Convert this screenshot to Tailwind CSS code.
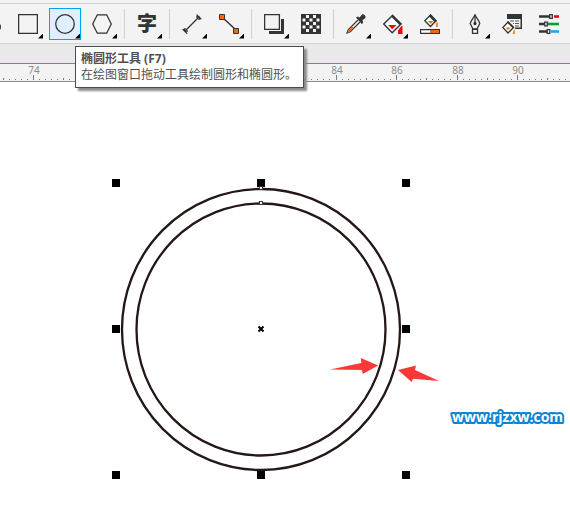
<!DOCTYPE html>
<html lang="zh-CN">

<head>
    <meta charset="UTF-8">
    <meta name="viewport" content="width=device-width, initial-scale=1.0">
    <title>椭圆形工具</title>
    <script src="https://cdn.jsdelivr.net/npm/@tailwindcss/browser@4"></script>
</head>

<body class="bg-white font-['Noto_Sans','Noto_Sans_CJK_SC',sans-serif] min-h-screen flex flex-col overflow-hidden">
    <!-- toolbar -->
    <header class="bg-[#f3f3f3] pt-[3px]">
        <div class="border-y border-[#d4d4d4] flex items-center gap-[5px] h-[41px] -ml-[25px] pr-1 overflow-hidden [&>button]:relative [&>button]:size-8 [&>button]:shrink-0 [&>button]:flex [&>button]:items-center [&>button]:justify-center [&>span]:w-px [&>span]:h-[30px] [&>span]:mx-px [&>span]:bg-[#d0d0d0] [&>span]:shrink-0">
            <button type="button" aria-label="手绘">
                <svg class="size-5 overflow-visible" viewBox="0 0 20 20"><circle cx="16" cy="13" r="4" fill="#333"/></svg>
            </button>
            <button type="button" aria-label="矩形工具">
                <svg class="size-5" viewBox="0 0 20 20"><path d="M.6 .6h18.8v18.8H.6z" fill="none" stroke="#333" stroke-width="1.3"/></svg>
                <i class="absolute right-px bottom-px size-[5px] bg-black [clip-path:polygon(100%_0,100%_100%,0_100%)]"></i>
            </button>
            <button type="button" aria-label="椭圆形工具" class="bg-[#e0efff] border border-[#00a2f5]">
                <svg class="size-5" viewBox="0 0 20 20"><circle cx="10" cy="10" r="9.3" fill="none" stroke="#333" stroke-width="1.3"/></svg>
                <i class="absolute right-0 bottom-0 size-[5px] bg-black [clip-path:polygon(100%_0,100%_100%,0_100%)]"></i>
            </button>
            <button type="button" aria-label="多边形工具">
                <svg class="size-5" viewBox="0 0 20 20"><path d="M5.3 .8h9.4L19.3 10l-4.6 9.2H5.3L.7 10z" fill="none" stroke="#333" stroke-width="1.3"/></svg>
                <i class="absolute right-px bottom-px size-[5px] bg-black [clip-path:polygon(100%_0,100%_100%,0_100%)]"></i>
            </button>
            <span></span>
            <button type="button" aria-label="文本工具" class="text-[20px] leading-5 font-black text-[#333]">字
                <i class="absolute right-px bottom-px size-[5px] bg-black [clip-path:polygon(100%_0,100%_100%,0_100%)]"></i>
            </button>
            <span></span>
            <button type="button" aria-label="平行度量">
                <svg class="size-5" viewBox="0 0 20 20" fill="none" stroke="#333" stroke-width="1.3"><path d="M2.8 17.2 17.2 2.8M.6 15l4.6 4.6M14.6 .6l4.6 4.6M2.8 14v3.2H6M14 2.8h3.2V6"/></svg>
                <i class="absolute right-px bottom-px size-[5px] bg-black [clip-path:polygon(100%_0,100%_100%,0_100%)]"></i>
            </button>
            <button type="button" aria-label="直线连接器">
                <svg class="size-5" viewBox="0 0 20 20" stroke="#333"><path d="M3 3l14 13" stroke-width="1.5"/><path d="M.5 .5h5v5h-5zM14.5 14.5h5v5h-5z" fill="#ff6a00"/></svg>
                <i class="absolute right-px bottom-px size-[5px] bg-black [clip-path:polygon(100%_0,100%_100%,0_100%)]"></i>
            </button>
            <span></span>
            <button type="button" aria-label="阴影工具">
                <svg class="size-5" viewBox="0 0 20 20"><path d="M5 5h15v15H5z" fill="#333"/><path d="M0 0h17v17H0z" fill="#f3f3f3"/><path d="M.6 .6h14.8v14.8H.6z" fill="#f3f3f3" stroke="#333" stroke-width="1.3"/></svg>
                <i class="absolute right-px bottom-px size-[5px] bg-black [clip-path:polygon(100%_0,100%_100%,0_100%)]"></i>
            </button>
            <button type="button" aria-label="透明度工具">
                <svg class="size-5" viewBox="0 0 20 20"><path d="M0 0h20v20H0z" fill="#333"/><path d="M5 1h3v3H5zM12 1h3v3h-3zM1.5 4.5h3v3h-3zM8.5 4.5h3v3h-3zM15.5 4.5h3v3h-3zM5 8h3v3H5zM12 8h3v3h-3zM1.5 11.5h3v3h-3zM8.5 11.5h3v3h-3zM15.5 11.5h3v3h-3zM5 15h3v3H5zM12 15h3v3h-3z" fill="#f3f3f3"/></svg>
            </button>
            <span></span>
            <button type="button" aria-label="颜色滴管">
                <svg class="size-5" viewBox="0 0 20 20"><path d="M12 6 2.3 15.7 1 19l3.3-1.3L14 8" fill="#f3f3f3" stroke="#333" stroke-width="1.2"/><path d="M6 12.5l1.8 1.5-3.6 3.6L1.3 19l1-3z" fill="#f06a10"/><path d="M10 3.5l2-1 1.5 1L16 .5c1.5-1 4.5 1.5 3.3 3.5l-3 2.5 1 1.5-1.3 2.3z" fill="#333"/></svg>
                <i class="absolute right-px bottom-px size-[5px] bg-black [clip-path:polygon(100%_0,100%_100%,0_100%)]"></i>
            </button>
            <button type="button" aria-label="交互式填充">
                <svg class="size-5" viewBox="0 0 20 20"><path d="M9.5 1.5 18 10l-8.8 8.8L.8 10z" fill="#fff" stroke="#333" stroke-width="1.4"/><path d="M9.5 .5 19 10l-2.5 1L8 2.5z" fill="#333"/><path d="M5 11h8.5l-4.3 4.3z" fill="#f00"/><path d="M17.5 13l2-1.5V20H15v-3.5z" fill="#f00"/></svg>
                <i class="absolute right-px bottom-px size-[5px] bg-black [clip-path:polygon(100%_0,100%_100%,0_100%)]"></i>
            </button>
            <button type="button" aria-label="智能填充">
                <svg class="size-5" viewBox="0 0 20 20"><path d="M10.5 1 16 6.8l-5.5 5.7L4.8 6.8z" fill="#fff" stroke="#333" stroke-width="1.3"/><path d="M10.5 0 17 7l-1.8 1.5L9 2.5z" fill="#333"/><path d="M8 7h5.5l-2.7 3z" fill="#f57818"/><path d="M16 9l2-.8V13h-2z" fill="#ff8a30"/><path d="M.6 15.6h18.8v3.8H.6z" fill="#fff" stroke="#333" stroke-width="1.2"/><path d="M10 16h9v3h-9z" fill="#e86a10"/></svg>
            </button>
            <span></span>
            <button type="button" aria-label="轮廓笔">
                <svg class="size-5" viewBox="0 0 20 20" fill="#f3f3f3" stroke="#333" stroke-width="1.3"><path d="M10 .7C8.5 4 6 6.5 5.2 9.5L8 15h4l2.8-5.5C14 6.5 11.5 4 10 .7z"/><path d="M10 1v8"/><circle cx="10" cy="9.5" r="1" fill="#333"/><path d="M7.5 15.3h5v4h-5z"/></svg>
                <i class="absolute right-px bottom-px size-[5px] bg-black [clip-path:polygon(100%_0,100%_100%,0_100%)]"></i>
            </button>
            <button type="button" aria-label="编辑填充">
                <svg class="size-5" viewBox="0 0 20 20"><path d="M5 0h15v15h-6.5l-1-1.5h6V5H5z" fill="#333"/><path d="M8 7h4M13 7h4M11 9.5h1M13 9.5h4M13 12h4" stroke="#555"/><path d="M6 8l5.5 5.5L6 19 .8 13.5z" fill="#fff" stroke="#333" stroke-width="1.3"/><path d="M6 7l6 6-1.5 1-5.3-5.5z" fill="#333"/><path d="M3.5 13.5h5L6 16.2z" fill="#f57818"/><path d="M11.5 16.5l1.5-1V20h-2.5z" fill="#ff8a30"/></svg>
            </button>
            <button type="button" aria-label="对象属性">
                <svg class="size-5" viewBox="0 0 20 20"><path d="M0 2.5h11M0 10h5M0 17.5h8" stroke="#333" stroke-width="2.6"/><path d="M15 2.5h5" stroke="#f00018" stroke-width="2.6"/><path d="M9 10h11" stroke="#0a9a3c" stroke-width="2.6"/><path d="M12 17.5h8" stroke="#18a4f0" stroke-width="2.6"/><path d="M10.7 .6h2.6v3.8h-2.6zM5.7 8.1h2.6v3.8H5.7zM8.2 15.6h2.6v3.8H8.2z" fill="#fff" stroke="#333" stroke-width="1.3"/></svg>
            </button>
        </div>
    </header>

    <div class="relative">
        <div class="h-5 bg-[#e9e9e9] border-b border-[#12a3e8]"></div>
        <!-- ruler -->
        <div class="bg-[#f3f3f3] border-b border-[#8a8a8a]">
            <svg id="ruler" class="block w-full h-[17px] text-[10px]" shape-rendering="crispEdges"></svg>
        </div>
        <!-- tooltip -->
        <div role="tooltip" class="absolute left-[75px] top-[2px] w-[229px] h-[42px] pl-[5px] pt-1 bg-white border border-[#4d4d4d] shadow-[3px_3px_2px_#8c8c8c] text-[12px] leading-4 text-[#505050] whitespace-nowrap">
            <p class="font-bold">椭圆形工具 (F7)</p>
            <p>在绘图窗口拖动工具绘制圆形和椭圆形。</p>
        </div>
    </div>

    <!-- drawing window -->
    <main class="flex-1 pt-px">
        <svg class="block w-full h-[441px]" role="img" aria-label="圆形">
            <g fill="none" stroke="#231815" stroke-width="2.3">
                <ellipse cx="261" cy="246.5" rx="139" ry="140.5"/>
                <ellipse cx="261" cy="246.5" rx="124.5" ry="126"/>
            </g>
            <g shape-rendering="crispEdges">
                <path d="M112 96h8v8h-8zM257 96h8v8h-8zM402 96h8v8h-8zM112 242h8v8h-8zM402 242h8v8h-8zM112 388h8v8h-8zM257 388h8v8h-8zM402 388h8v8h-8z"/>
                <path d="M259.5 103.5h3v3h-3zM259.5 118.5h3v3h-3z" fill="#fff" stroke="#334" stroke-width="1"/>
            </g>
            <path d="M258.5 243.5l5 5M263.5 243.5l-5 5" stroke="#000" stroke-width="2"/>
            <g fill="#fb3838">
                <path d="M330 286.5l31.3-6.5-.5-5 17.4 7.5-15.5 8.5-.7-4z"/>
                <path d="M398 287l18-4.5-1 4.5 24 11-26-2.2-1.3 3.2z"/>
            </g>
            <text x="452" y="339" class="font-['Open_Sans'] font-bold text-[14px]" fill="#fff" stroke="#0a84d4" stroke-width="4" stroke-linejoin="round" paint-order="stroke">www.rjzxw.com</text>
        </svg>
    </main>

    <script>
        const ruler = document.getElementById('ruler');
        const start = 33;
        const unit = 6.05;

        function drawRuler() {
            let marks = '';
            for (let i = -5; start + i * unit < window.innerWidth; i++) {
                // the tooltip covers these
                if (i > 7 && i < 45) continue;
                const x = Math.round(start + i * unit);
                const h = i % 10 === 0 ? 5 : i % 5 === 0 ? 2 : 1;
                marks += `<rect x="${x}" y="${16 - h}" width="1" height="${h}" fill="#777"/>`;
                if (i % 10 === 0) {
                    marks += `<text x="${x + 1}" y="10" text-anchor="middle" fill="#8c8c8c">${74 + i / 5}</text>`;
                }
            }
            ruler.innerHTML = marks;
        }
        drawRuler();
        window.addEventListener('resize', drawRuler);
    </script>
</body>

</html>
